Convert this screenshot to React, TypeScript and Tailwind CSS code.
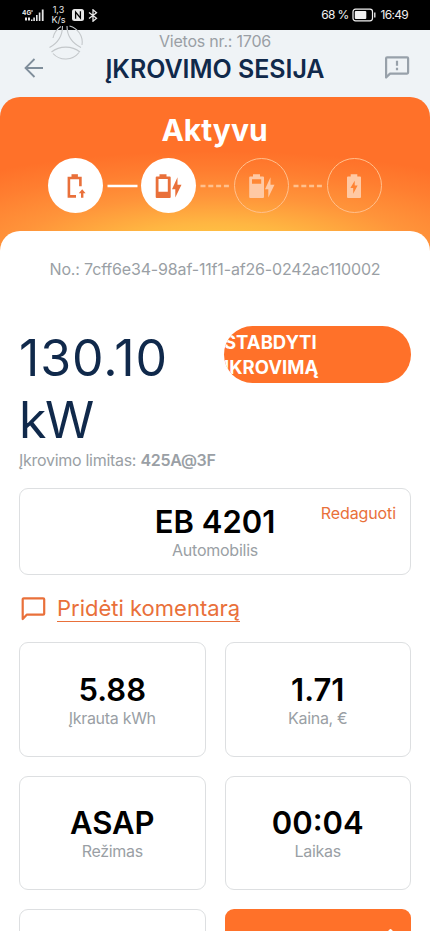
import type { ReactNode } from "react";
import { clsx } from "clsx";

interface Step {
  id: string;
  done: boolean;
  icon: ReactNode;
}

interface Stat {
  value: string;
  label: string;
}

const steps: Step[] = [
  {
    id: "connect",
    done: true,
    icon: (
      <svg width="36" height="30" viewBox="0 0 36 30" fill="none">
        <path d="M19 25.400H11.900V7h11.500v8.300" stroke="#e9703a" strokeWidth="2.600" />
        <path d="M14.500 3.200h6.400V7h-6.400z" fill="#e9703a" />
        <path d="M25.200 18.200l3.400 4h-2.200v4.600h-2.400v-4.600h-2.200z" fill="#e9703a" />
      </svg>
    ),
  },
  {
    id: "charging",
    done: true,
    icon: (
      <svg width="36" height="30" viewBox="0 0 36 30">
        <path
          fillRule="evenodd"
          d="M9.500 3.200h7v2.200h3.200a1 1 0 0 1 1 1V26a1 1 0 0 1-1 1h-13a1 1 0 0 1-1-1V6.400a1 1 0 0 1 1-1h2.800zM8.500 8V20.700h9.300V8z"
          fill="#e9703a"
        />
        <path d="M27.500 6.200v7.600h4L25.300 26.500v-8.300H22z" fill="#e9703a" />
      </svg>
    ),
  },
  {
    id: "balancing",
    done: false,
    icon: (
      <svg width="36" height="30" viewBox="0 0 36 30">
        <path
          fillRule="evenodd"
          d="M10 3.200h7v2.200h3a1 1 0 0 1 1 1V26a1 1 0 0 1-1 1H7.200a1 1 0 0 1-1-1V6.400a1 1 0 0 1 1-1H10zM9 8.200V12.800h9.200V8.200z"
          fill="#ffc9a4"
        />
        <path d="M27.500 6.200v7.600h4L25.300 26.500v-8.300H22z" fill="#ffc9a4" />
      </svg>
    ),
  },
  {
    id: "finished",
    done: false,
    icon: (
      <svg width="36" height="30" viewBox="0 0 36 30">
        <path
          fillRule="evenodd"
          d="M14.700 3.200h6.600v2.200H24a1 1 0 0 1 1 1V26a1 1 0 0 1-1 1H12a1 1 0 0 1-1-1V6.400a1 1 0 0 1 1-1h2.700zM18.700 9.800L14.400 17h2.800V22.800l4.400-8.200h-2.900z"
          fill="#ffc9a4"
        />
      </svg>
    ),
  },
];

const stats: Stat[] = [
  { value: "5.88", label: "Įkrauta kWh" },
  { value: "1.71", label: "Kaina, €" },
  { value: "ASAP", label: "Režimas" },
  { value: "00:04", label: "Laikas" },
];

function StatusBar() {
  return (
    <div className="flex h-[30px] shrink-0 items-center justify-between bg-black px-[22px] text-[#e8e8e8]">
      <div className="flex items-center">
        <svg width="22" height="13" viewBox="0 0 22 13" fill="currentColor">
          <text x="0" y="5.500" fontSize="6.500" fontWeight="700">4G</text>
          <path d="M9 1.500h2v1H9zM3 8.500h2v3H3zM6 8.500h2v3H6zM9 10.500h1.500V12H9zM11.300 8.500h1.600V12h-1.600zM14 6h1.600v6H14zM16.800 3.500h1.600V12h-1.600zM19.800.500h1.800V12h-1.800z" />
        </svg>
        <div className="ml-[8px] flex w-[13px] flex-col items-center whitespace-nowrap text-[9px] leading-[10.5px]">
          <span>1,3</span>
          <span>K/s</span>
        </div>
        <svg width="12" height="12" viewBox="0 0 12 12" className="ml-[7px]">
          <rect width="12" height="12" rx="2.500" fill="currentColor" />
          <path d="M3.600 9.800V3l4.800 6V2.200" stroke="#000" strokeWidth="1.300" fill="none" />
        </svg>
        <svg width="10" height="13" viewBox="0 0 10 13" className="ml-1" fill="none" stroke="currentColor" strokeWidth="1.300">
          <path d="M1 3.500l7.500 5.700L5 12.200V.8l3.500 3L1 9.500" />
        </svg>
      </div>
      <div className="flex items-center text-[12px] tracking-[-0.700px] text-[#f1f1f1]">
        <span>68 %</span>
        <svg width="24" height="14" viewBox="0 0 24 14" className="ml-[3px] mr-[5px]">
          <rect x="1" y="1.200" width="19.500" height="11.600" rx="2.500" fill="none" stroke="currentColor" strokeWidth="1.200" />
          <rect x="2.800" y="3" width="11.500" height="8" rx="1" fill="currentColor" />
          <path d="M22.800 4.500v5" stroke="currentColor" strokeWidth="1.300" />
        </svg>
        <span>16:49</span>
      </div>
    </div>
  );
}

function Header() {
  return (
    <header className="relative flex h-[67px] shrink-0 items-start justify-between px-5">
      {/* Logo badge hangs over the status bar */}
      <svg
        width="38"
        height="38"
        viewBox="0 0 38 38"
        fill="none"
        stroke="#c3c7ca"
        strokeWidth="1.100"
        className="absolute left-[47px] top-[-7px]"
      >
        <path d="M15.500 3C15.500 13 11 20 2.500 24.500M20 3c0 10 5 17 14 21.500" />
        <path d="M4.500 29c8-6.500 20.500-6.500 28.500 0" />
        <path d="M14 3.500C10 6 7 10 6 15M22.500 3A16.800 16.800 0 0 1 35 22M32 29.500A17 17 0 0 1 6 30.500" />
      </svg>
      <svg width="24" height="24" viewBox="0 0 24 24" fill="none" stroke="#7f8e9b" strokeWidth="1.800" className="ml-[2px] mt-[26px]">
        <path d="M21 12H3.500M12.500 3L3.500 12l9 9" />
      </svg>
      <div className="flex flex-col items-center">
        <p className="text-base leading-[22px] tracking-[-0.2px] text-[#9a9fa5]">Vietos nr.: 1706</p>
        <h1 className="text-[25px] font-semibold leading-[34px] tracking-[-0.03px] text-[#10294b]">ĮKROVIMO SESIJA</h1>
      </div>
      <svg width="26" height="26" viewBox="0 0 26 26" className="mt-[25px]" fill="none" stroke="#98a1aa" strokeWidth="2.200">
        <path d="M2.100 22.500V3.300a1 1 0 0 1 1-1h20a1 1 0 0 1 1 1v14.300a1 1 0 0 1-1 1H6z" strokeLinejoin="round" />
        <path d="M13 5.700v5M13 12.700v2.500" />
      </svg>
    </header>
  );
}

function Stepper() {
  return (
    <div className="flex items-center justify-center">
      {steps.map((step, i) => (
        <div key={step.id} className="flex items-center">
          {i > 0 && (
            <svg width="38" height="4" viewBox="0 0 38 4">
              <path
                d="M4.500 2h30"
                strokeWidth="2.500"
                stroke={step.done ? "#fff" : "#ffc08d"}
                strokeDasharray={step.done ? undefined : "5 2.800"}
              />
            </svg>
          )}
          <div
            className={clsx(
              "flex h-[55px] w-[55px] items-center justify-center rounded-full",
              step.done ? "bg-white" : "border border-[#ffc08d]"
            )}
          >
            {step.icon}
          </div>
        </div>
      ))}
    </div>
  );
}

function StatCard({ value, label }: Stat) {
  return (
    <div className="flex h-[114.500px] flex-col items-center justify-center rounded-[9px] border border-[#dddfe1] pt-[5px]">
      <span className="text-[31px] font-semibold leading-8 text-black">{value}</span>
      <span className="text-base leading-6 tracking-[-0.3px] text-[#9a9fa5]">{label}</span>
    </div>
  );
}

export default function App() {
  return (
    <div className="flex h-[931px] w-full flex-col overflow-hidden bg-[#eff3f6] font-['Inter',sans-serif]">
      <StatusBar />
      <Header />

      <div className="flex min-h-0 flex-1 flex-col rounded-t-[20px] bg-[radial-gradient(ellipse_370px_100px_at_50%_154px,#ffcf45_0%,#ffb642_28%,#ff943a_55%,#ff7e30_80%,#ff7129_100%)]">
        <div className="flex h-[134px] shrink-0 flex-col items-center pr-px pt-[14px]">
          <h2 className="mb-[9px] text-[30px] font-bold leading-[38px] text-white">Aktyvu</h2>
          <Stepper />
        </div>

        <main className="flex min-h-0 flex-1 flex-col rounded-t-[20px] bg-white px-[19px]">
          <p className="mt-[27px] text-center text-base leading-[22px] tracking-[-0.16px] text-[#9a9fa5]">
            No.: 7cff6e34-98af-11f1-af26-0242ac110002
          </p>

          <div className="mt-[46px] flex items-start justify-between">
            <p className="w-[180px] pt-px text-[50px] leading-[62px] text-[#10294b]">
              <span className="tracking-[0.9px]">130.10</span> <span className="tracking-[-1.5px]">kW</span>
            </p>
            <button className="h-[57px] w-[187px] overflow-hidden rounded-full bg-[#ff7129] text-left text-[18.500px] font-bold leading-[25px] text-white">
              STABDYTI ĮKROVIMĄ
            </button>
          </div>
          <p className="-mt-px text-base leading-[20px] tracking-[-0.29px] text-[#9a9fa5]">
            Įkrovimo limitas: <span className="font-semibold">425A@3F</span>
          </p>

          <div className="relative mt-[18px] flex h-[87px] shrink-0 flex-col items-center justify-center rounded-[9px] border border-[#dddfe1] pt-[5px]">
            <span className="text-[31px] font-semibold leading-8 text-black">EB 4201</span>
            <span className="text-base leading-6 tracking-[-0.25px] text-[#9a9fa5]">Automobilis</span>
            <button className="absolute right-[14px] top-[12px] text-base leading-6 tracking-[-0.1px] text-[#e9703a]">Redaguoti</button>
          </div>

          <div className="mt-[17px] flex h-8 shrink-0 items-center text-[#e9703a]">
            <svg width="27" height="26" viewBox="0 0 27 26" fill="none" stroke="currentColor" strokeWidth="2.200">
              <path d="M3.700 24V4.300a1 1 0 0 1 1-1h19.500a1 1 0 0 1 1 1v14.400a1 1 0 0 1-1 1H7.700z" strokeLinejoin="round" />
            </svg>
            <span className="ml-[11px] border-b border-[#e9703a] text-[22px] leading-[26px]">Pridėti komentarą</span>
          </div>

          <div className="mt-[18px] grid grid-cols-2 gap-x-[19px] gap-y-[19px]">
            {stats.map((stat) => (
              <StatCard key={stat.label} {...stat} />
            ))}
            <div className="h-[114.500px] rounded-[9px] border border-[#dddfe1]" />
            <div className="flex h-[114.500px] justify-end rounded-[9px] bg-[#ff7129] pr-[12px] pt-[19px]">
              <svg width="17" height="17" viewBox="0 0 17 17" fill="none" stroke="#fff" strokeWidth="2" strokeLinecap="round">
                <path d="M8.500 2v13M3 7.500L8.500 2l5.500 5.500" strokeLinejoin="round" />
              </svg>
            </div>
          </div>
        </main>
      </div>
    </div>
  );
}
